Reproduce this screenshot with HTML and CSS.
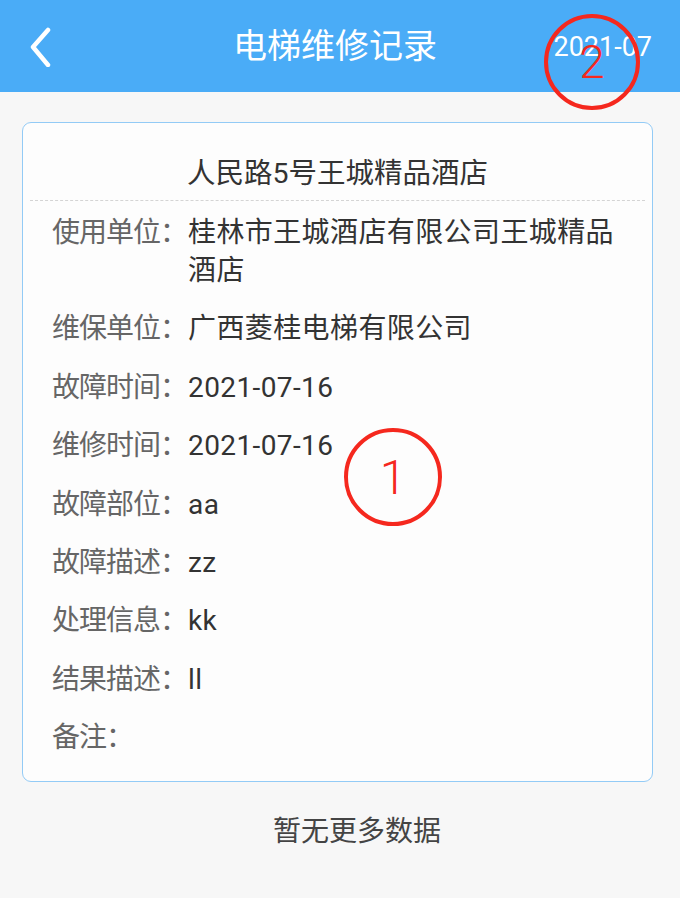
FILE: index.html
```html
<!DOCTYPE html>
<html lang="zh-CN">
<head>
<meta charset="utf-8">
<title>电梯维修记录</title>
<link rel="stylesheet" href="styles.css">
</head>
<body>
<header class="topbar">
  <svg class="back" width="30" height="44" viewBox="0 0 30 44">
    <polyline points="18,7 3,24 18,42" fill="none" stroke="#fff" stroke-width="4.5" stroke-linecap="round" stroke-linejoin="round"/>
  </svg>
  <h1 class="title">电梯维修记录</h1>
  <span class="month">2021-07</span>
  <div class="mark mark-2"><span>2</span></div>
</header>

<main class="content">
  <section class="card">
    <div class="card-title">人民路5号王城精品酒店</div>
    <div class="rows">
      <div class="row"><span class="label">使用单位：</span><span class="value">桂林市王城酒店有限公司王城精品酒店</span></div>
      <div class="row"><span class="label">维保单位：</span><span class="value">广西菱桂电梯有限公司</span></div>
      <div class="row"><span class="label">故障时间：</span><span class="value">2021-07-16</span></div>
      <div class="row"><span class="label">维修时间：</span><span class="value">2021-07-16</span></div>
      <div class="row"><span class="label">故障部位：</span><span class="value">aa</span></div>
      <div class="row"><span class="label">故障描述：</span><span class="value">zz</span></div>
      <div class="row"><span class="label">处理信息：</span><span class="value">kk</span></div>
      <div class="row"><span class="label">结果描述：</span><span class="value">ll</span></div>
      <div class="row"><span class="label">备注：</span><span class="value"></span></div>
    </div>
    <div class="mark mark-1"><span>1</span></div>
  </section>
  <p class="nomore">暂无更多数据</p>
</main>
</body>
</html>
```

FILE: styles.css
```css
* { box-sizing: border-box; }
html, body {
  margin: 0;
  padding: 0;
  background: #f7f7f7;
  font-family: Roboto, "Noto Sans CJK SC", "Noto Sans", sans-serif;
}
.topbar {
  position: relative;
  height: 92px;
  background: #4aacf7;
  display: flex;
  align-items: center;
  justify-content: space-between;
  padding: 0 28px 0 30px;
}
.back { display: block; margin-top: -2px; }
.title {
  position: absolute;
  left: 0; right: 0;
  top: 0;
  margin: 0;
  line-height: 92px;
  text-align: center;
  font-size: 34px;
  font-weight: normal;
  color: #fff;
  pointer-events: none;
  padding-right: 10px;
}
.month {
  color: #fff;
  font-size: 27px;
  margin-top: 2px;
}
.mark {
  position: absolute;
  border: 4px solid #f5281e;
  border-radius: 50%;
  display: flex;
  align-items: center;
  justify-content: center;
  color: #f5281e;
  font-family: Roboto, sans-serif;
  font-weight: 300;
  z-index: 2;
}
.mark-2 {
  width: 96px; height: 96px;
  left: 544px; top: 14px;
  font-size: 46px;
}
.mark-1 {
  width: 98px; height: 98px;
  left: 321px; top: 305px;
  font-size: 48px;
}
.content { padding-top: 30px; }
.card {
  position: relative;
  margin: 0 27px 0 22px;
  background: #fdfdfd;
  border: 1px solid #93cbf6;
  border-radius: 9px;
  padding: 32px 0 24px;
}
.card-title {
  text-align: center;
  font-size: 28.5px;
  line-height: 38px;
  color: #333;
  padding-bottom: 7px;
  margin: 0 7px;
  border-bottom: 1.5px dashed #d4d4d4;
}
.rows {
  padding: 13px 30px 0 29px;
  display: flex;
  flex-direction: column;
  gap: 20.4px;
}
.row {
  display: flex;
  font-size: 28px;
  line-height: 38px;
}
.label {
  flex: none;
  width: 136px;
  color: #666;
  white-space: nowrap;
  letter-spacing: -1px;
}
.value {
  flex: 1;
  color: #333;
  letter-spacing: 0.4px;
}
.nomore {
  margin: 31px 0 0;
  padding-left: 34px;
  text-align: center;
  font-size: 28px;
  line-height: 38px;
  color: #444;
}
```
